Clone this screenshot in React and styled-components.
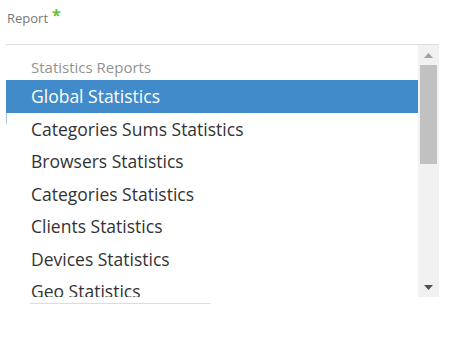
import React from 'react'
import styled, { createGlobalStyle } from 'styled-components';

const GlobalStyle = createGlobalStyle`
  body {
    margin: 0;
    background: #ffffff;
    font-family: "Open Sans", "Liberation Sans", sans-serif;
  }
`

const Page = styled.div`
  width: 457px;
  height: 344px;
  padding: 8px 18px 0 6px;
  box-sizing: border-box;
`

const Label = styled.div`
  font-size: 13px;
  line-height: 18px;
  color: #777777;
  padding-left: 1px;
  height: 36px;
`

const Star = styled.span`
  color: #6cbf3a;
  font-size: 16px;
  margin-left: 4px;
  font-weight: 700;
  position: relative;
  top: -2px;
`

const ListBox = styled.div`
  display: flex;
  border-top: 1px solid #dddddd;
  height: 252px;
  position: relative;
`

const Options = styled.div`
  flex: 1;
  overflow: hidden;
`

const GroupHeader = styled.div`
  height: 35px;
  box-sizing: border-box;
  padding: 13px 0 0 25px;
  line-height: 18px;
  font-size: 15px;
  color: #929292;
`

const Option = styled.div`
  height: 32.5px;
  display: flex;
  align-items: center;
  padding-left: 25px;
  font-size: 17.5px;
  color: ${p => (p.$selected ? '#ffffff' : '#333333')};
  background: ${p => (p.$selected ? '#428bca' : 'transparent')};
  white-space: nowrap;
`

const FocusMark = styled.div`
  position: absolute;
  left: 0;
  top: 68px;
  width: 1px;
  height: 11px;
  background: #a9c4e6;
`

const Scrollbar = styled.div`
  width: 21px;
  background: #f1f1f1;
  display: flex;
  flex-direction: column;
  align-items: center;
`

const Arrow = styled.div`
  height: 20px;
  display: flex;
  align-items: center;
  justify-content: center;
`

const Thumb = styled.div`
  width: 17px;
  height: 99px;
  background: #c1c1c1;
`

const Track = styled.div`
  flex: 1;
`

const Underline = styled.div`
  margin: 6px 0 0 24px;
  width: 181px;
  height: 1px;
  background: #dddddd;
`

const items = [
  'Global Statistics',
  'Categories Sums Statistics',
  'Browsers Statistics',
  'Categories Statistics',
  'Clients Statistics',
  'Devices Statistics',
  'Geo Statistics',
  'Pages Statistics',
]

export default function App() {
  return (
    <>
      <GlobalStyle />
      <Page>
        <Label>Report<Star>*</Star></Label>
        <ListBox>
          <Options>
            <GroupHeader>Statistics Reports</GroupHeader>
            {items.map((item, i) => (
              <Option key={item} $selected={i === 0}>{item}</Option>
            ))}
          </Options>
          <FocusMark />
          <Scrollbar>
            <Arrow>
              <svg width="9" height="5" viewBox="0 0 9 5">
                <polygon points="0,5 9,5 4.5,0" fill="#a3a3a3" />
              </svg>
            </Arrow>
            <Thumb />
            <Track />
            <Arrow>
              <svg width="9" height="5" viewBox="0 0 9 5">
                <polygon points="0,0 9,0 4.5,5" fill="#505050" />
              </svg>
            </Arrow>
          </Scrollbar>
        </ListBox>
        <Underline />
      </Page>
    </>
  )
}
